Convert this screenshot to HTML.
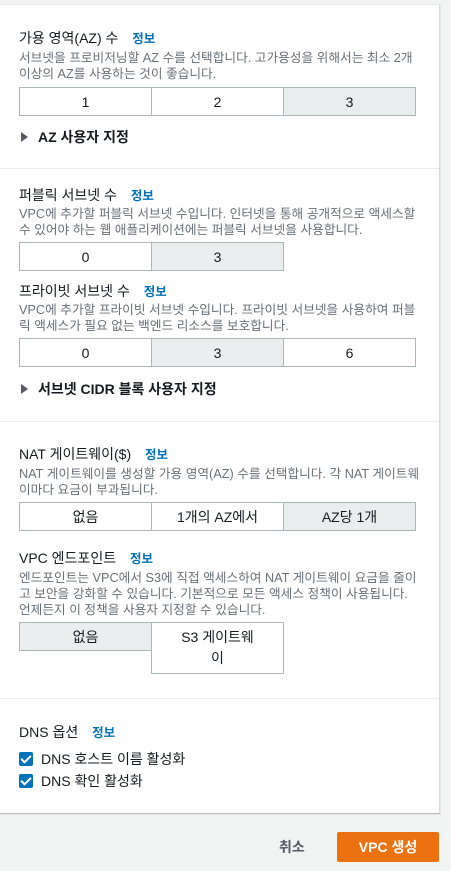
<!DOCTYPE html>
<html><head><meta charset="utf-8"><style>
*{margin:0;padding:0;box-sizing:border-box}
body{width:451px;height:871px;background:#f2f3f3;position:relative;overflow:hidden;font-family:"Liberation Sans","Noto Sans CJK KR",sans-serif;color:#16191f}
.panel{position:absolute;left:0;top:4px;width:440px;height:809px;background:#fff;border-top:1px solid #eaeded;border-right:1px solid #d5dbdb;box-shadow:0 1px 1px rgba(0,28,36,.3)}
.div{position:absolute;left:0;width:439px;height:1px;background:#eaeded}
.t{position:absolute;left:19px;font-size:14px;white-space:nowrap;line-height:18px}
.t b{font-weight:bold;color:#0073bb;font-size:12.5px;margin-left:10px}
.d{position:absolute;left:19px;font-size:12.7px;color:#687078;line-height:16px;white-space:nowrap}
.seg{position:absolute;left:19px;display:flex;height:29px}
.seg div{width:133px;border:1px solid #aab7b8;margin-right:-1px;display:flex;align-items:center;justify-content:center;font-size:14px;color:#16191f;background:#fff}
.seg div.on{background:#eaeded}
.ex{position:absolute;left:21px;font-size:14px;font-weight:bold;white-space:nowrap;line-height:18px}
.ex span{display:inline-block;width:0;height:0;border-left:7px solid #545b64;border-top:5px solid transparent;border-bottom:5px solid transparent;margin-right:10px;vertical-align:0px}
.cb{position:absolute;left:19px;font-size:14px;white-space:nowrap;line-height:18px}
.cb i{display:inline-block;width:14px;height:14px;background:#0073bb;border-radius:2px;vertical-align:-2px;margin-right:8px;position:relative}
.cb i:after{content:"";position:absolute;left:4px;top:1px;width:4px;height:8px;border:solid #fff;border-width:0 2px 2px 0;transform:rotate(45deg)}
</style></head><body>
<div class="panel"></div>
<div class="div" style="top:168px"></div>
<div class="div" style="top:421px"></div>
<div class="div" style="top:698px"></div>

<div class="t" style="top:29px">가용 영역(AZ) 수 <b>정보</b></div>
<div class="d" style="top:50px">서브넷을 프로비저닝할 AZ 수를 선택합니다. 고가용성을 위해서는 최소 2개<br>이상의 AZ를 사용하는 것이 좋습니다.</div>
<div class="seg" style="top:87px"><div>1</div><div>2</div><div class="on">3</div></div>
<div class="ex" style="top:128px"><span></span>AZ 사용자 지정</div>

<div class="t" style="top:186px">퍼블릭 서브넷 수 <b>정보</b></div>
<div class="d" style="top:206px">VPC에 추가할 퍼블릭 서브넷 수입니다. 인터넷을 통해 공개적으로 액세스할<br>수 있어야 하는 웹 애플리케이션에는 퍼블릭 서브넷을 사용합니다.</div>
<div class="seg" style="top:242px"><div>0</div><div class="on">3</div></div>
<div class="t" style="top:282px">프라이빗 서브넷 수 <b>정보</b></div>
<div class="d" style="top:302px">VPC에 추가할 프라이빗 서브넷 수입니다. 프라이빗 서브넷을 사용하여 퍼블<br>릭 액세스가 필요 없는 백엔드 리소스를 보호합니다.</div>
<div class="seg" style="top:338px"><div>0</div><div class="on">3</div><div>6</div></div>
<div class="ex" style="top:380px"><span></span>서브넷 CIDR 블록 사용자 지정</div>

<div class="t" style="top:445px">NAT 게이트웨이($) <b>정보</b></div>
<div class="d" style="top:466px">NAT 게이트웨이를 생성할 가용 영역(AZ) 수를 선택합니다. 각 NAT 게이트웨<br>이마다 요금이 부과됩니다.</div>
<div class="seg" style="top:502px"><div>없음</div><div>1개의 AZ에서</div><div class="on">AZ당 1개</div></div>
<div class="t" style="top:549px">VPC 엔드포인트 <b>정보</b></div>
<div class="d" style="top:570px">엔드포인트는 VPC에서 S3에 직접 액세스하여 NAT 게이트웨이 요금을 줄이<br>고 보안을 강화할 수 있습니다. 기본적으로 모든 액세스 정책이 사용됩니다.<br>언제든지 이 정책을 사용자 지정할 수 있습니다.</div>
<div class="seg" style="top:622px;height:52px;align-items:flex-start"><div class="on" style="height:29px">없음</div><div style="height:52px;text-align:center;line-height:21px">S3 게이트웨<br>이</div></div>

<div class="t" style="top:723px">DNS 옵션 <b>정보</b></div>
<div class="cb" style="top:750px"><i></i>DNS 호스트 이름 활성화</div>
<div class="cb" style="top:772px"><i></i>DNS 확인 활성화</div>

<div style="position:absolute;left:279px;top:837px;font-size:14px;font-weight:bold;color:#545b64">취소</div>
<div style="position:absolute;left:337px;top:832px;width:102px;height:30px;background:#ec7211;border-radius:2px;color:#fff;font-weight:bold;font-size:14px;display:flex;align-items:center;justify-content:center">VPC 생성</div>
</body></html>
